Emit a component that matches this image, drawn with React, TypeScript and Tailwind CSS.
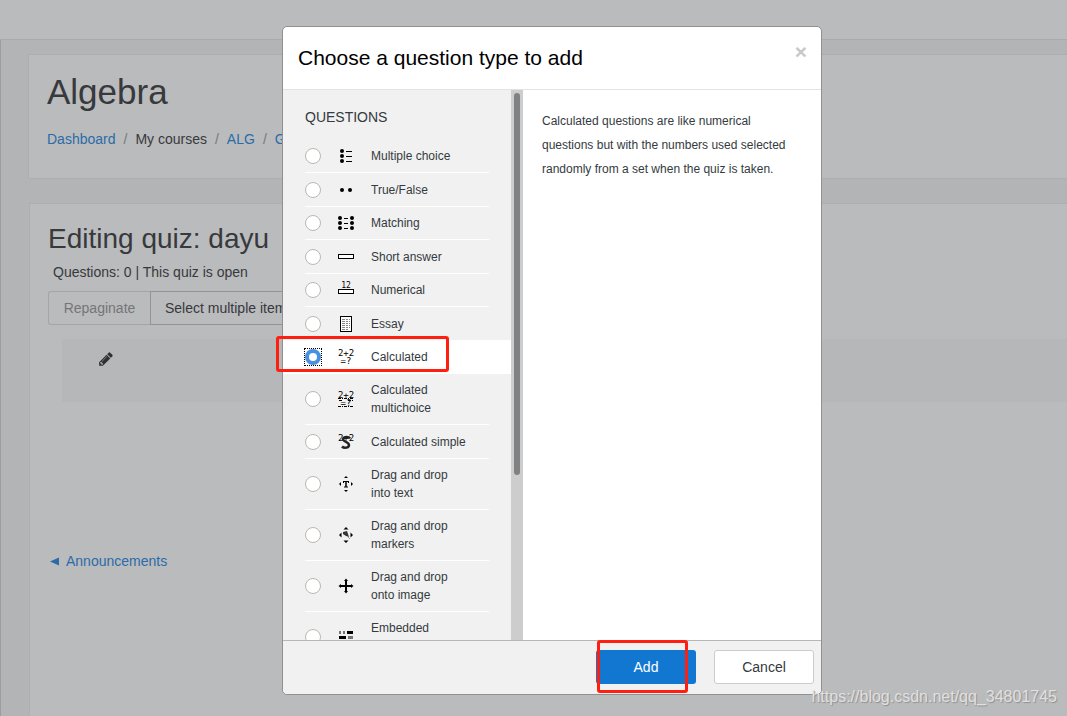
import React, { useState } from 'react'
import clsx from 'clsx'

const numerals = '[font-family:"DejaVu_Sans_Mono",monospace]'

const Dots = ({ cx }: { cx: number }) => (
   <>
      <circle cx={cx} cy="3" r="2" />
      <circle cx={cx} cy="8" r="2" />
      <circle cx={cx} cy="13" r="2" />
   </>
)

const DragArrows = () => <path d="M8 0l2.5 2.5h-5zM8 16l2.5-2.5h-5zM1 8l2.5-2.5v5zM15 8l-2.5-2.5v5z" />

const Sum = () => (
   <text x="8" y="7" fontSize="9" textAnchor="middle" className={numerals}>
      2+2
   </text>
)

const Unknown = () => (
   <text x="8" y="15" fontSize="9" textAnchor="middle" className={numerals}>
      =?
   </text>
)

const icons: Record<string, React.ReactNode> = {
   multichoice: (
      <>
         <Dots cx={4} />
         <path d="M8 3h6v1H8zM8 8h6v1H8zM8 13h6v1H8z" />
      </>
   ),
   truefalse: (
      <>
         <circle cx="4" cy="8" r="2" />
         <circle cx="12" cy="8" r="2" />
      </>
   ),
   match: (
      <>
         <Dots cx={2} />
         <Dots cx={14} />
         <path d="M6 3h4v1H6zM6 8h4v1H6zM6 13h4v1H6z" />
      </>
   ),
   shortanswer: <rect x="0.5" y="5.5" width="15" height="4" fill="#fff" stroke="#000" />,
   numerical: (
      <>
         <text x="8" y="6" fontSize="8" textAnchor="middle" className={numerals}>
            12
         </text>
         <rect x="0.5" y="7.5" width="15" height="4" fill="#fff" stroke="#000" />
      </>
   ),
   essay: (
      <>
         <rect x="2.5" y="0.5" width="11" height="15" fill="#fff" stroke="#000" />
         <path
            d="M4 3.5h8M4 5.5h8M4 7.5h8M4 9.5h8M4 11.5h8M4 13.5h6"
            stroke="#888"
            strokeWidth="1"
            strokeDasharray="3 1 2 1"
         />
      </>
   ),
   calculated: (
      <>
         <Sum />
         <Unknown />
      </>
   ),
   calculatedmulti: (
      <>
         <Sum />
         <Unknown />
         <path d="M0 7.5h16M1 9.5h4M10 9.5h5M0 15.5h16" stroke="#000" strokeDasharray="3 1 1 1" />
      </>
   ),
   calculatedsimple: (
      <>
         <Sum />
         <path
            d="M12 4.5C11 2.5 6 2 5 5c-.5 2.5 6 3 6 6 0 3-5 3.5-7 1.5"
            fill="none"
            stroke="#222"
            strokeWidth="2.5"
         />
      </>
   ),
   ddwtos: (
      <>
         <path d="M8 0l2 2H6zM8 16l2-2H6zM1 8l2-2v4zM15 8l-2-2v4z" />
         <path d="M5 5h6v2h-1V6H8.75v4.5H10v1H6v-1h1.25V6H6v1H5z" />
      </>
   ),
   ddmarker: (
      <>
         <DragArrows />
         <path d="M5 5l4-1 1 3 1 3-3-1-3-2z" fill="#333" />
         <path d="M9 9l3 3" stroke="#999" />
      </>
   ),
   ddimageortext: (
      <path d="M7 3H6l2-2.500L10 3H9v4h4V6l2.500 2L13 10V9H9v4h1l-2 2.500L6 13h1V9H3v1L.5 8 3 6v1h4z" />
   ),
   multianswer: (
      <>
         <path d="M1 2h2v3H1zM5 2h2v3H5zM10 7h5v3h-5z" fill="#777" />
         <path d="M9 2h6v3H9zM1 7h7v3H1z" />
      </>
   ),
}

const questionTypes = [
   { id: 'multichoice', label: 'Multiple choice' },
   { id: 'truefalse', label: 'True/False' },
   { id: 'match', label: 'Matching' },
   { id: 'shortanswer', label: 'Short answer' },
   { id: 'numerical', label: 'Numerical' },
   { id: 'essay', label: 'Essay' },
   { id: 'calculated', label: 'Calculated' },
   { id: 'calculatedmulti', label: 'Calculated multichoice' },
   { id: 'calculatedsimple', label: 'Calculated simple' },
   { id: 'ddwtos', label: 'Drag and drop into text' },
   { id: 'ddmarker', label: 'Drag and drop markers' },
   { id: 'ddimageortext', label: 'Drag and drop onto image' },
   { id: 'multianswer', label: 'Embedded answers (Cloze)' },
]

const PencilIcon = ({ className }: { className?: string }) => (
   <svg viewBox="0 0 1792 1792" className={clsx('size-4 fill-current', className)} aria-hidden="true">
      <path d="M491 1536l91-91-235-235-91 91v107h128v128h107zm523-928q0-22-22-22-10 0-17 7l-542 542q-7 7-7 17 0 22 22 22 10 0 17-7l542-542q7-7 7-17zm-54-192l416 416-832 832h-416v-416zm683 96q0 53-37 90l-166 166-416-416 166-165q36-38 90-38 53 0 91 38l235 234q37 39 37 91z" />
   </svg>
)

type OptionProps = {
   id: string
   label: string
   checked: boolean
   onSelect: (id: string) => void
}

const QuestionOption = ({ id, label, checked, onSelect }: OptionProps) => (
   <li className={clsx('group px-[22px]', checked && '-mt-px bg-white pt-px')}>
      <label
         htmlFor={`qtype_${id}`}
         className="flex min-h-[34px] items-center gap-[17px] border-b border-white py-[7px] group-[:nth-child(odd):nth-child(-n+7)]:min-h-[33px]"
      >
         <span className={clsx('flex shrink-0', checked && 'outline-1 outline-black outline-dotted')}>
            <input
               type="radio"
               name="qtype"
               id={`qtype_${id}`}
               checked={checked}
               onChange={() => onSelect(id)}
               className="size-4 appearance-none rounded-full border border-[#bdb7b2] bg-white outline-none checked:border-4 checked:border-[#4a90e2]"
            />
         </span>
         <svg viewBox="0 0 16 16" className="size-4 shrink-0 overflow-visible" aria-hidden="true">
            {icons[id]}
         </svg>
         <span className="w-[98px] text-xs leading-[18px]">{label}</span>
      </label>
   </li>
)

const QuestionDialog = () => {
   const [selected, setSelected] = useState('calculated')

   return (
      <div
         role="dialog"
         aria-labelledby="chooser-title"
         className="w-[540px] rounded-[5px] border border-[#8f9092] bg-white text-[#343a40]"
      >
         <div className="flex h-[63px] justify-between border-b border-[#e3e3e3] pr-[14px] pl-[15px] text-black">
            <h3 id="chooser-title" className="self-center text-[21px] leading-8">
               Choose a question type to add
            </h3>
            <button type="button" aria-label="Close" className="h-[50px] text-[21px] font-bold text-[#c8c8c8]">
               ×
            </button>
         </div>

         <div className="relative flex h-[550px]">
            <div className="w-[228px] overflow-hidden bg-[#f1f1f1]">
               <h4 className="px-[22px] pt-[17px] pb-[13px] text-sm leading-5">QUESTIONS</h4>
               <ul>
                  {questionTypes.map((type) => (
                     <QuestionOption
                        key={type.id}
                        id={type.id}
                        label={type.label}
                        checked={selected === type.id}
                        onSelect={setSelected}
                     />
                  ))}
               </ul>
            </div>
            <div className="w-3 bg-[#cdcdcd] px-[3px] pt-[3px]">
               <div className="h-[382px] rounded-full bg-[#7f8182]" />
            </div>
            <p className="flex-1 py-[19px] pr-[26px] pl-[19px] text-xs leading-6">
               Calculated questions are like numerical questions but with the numbers used selected randomly from a set
               when the quiz is taken.
            </p>
            <div className="pointer-events-none absolute top-[246px] -left-[7px] h-9 w-[173px] rounded-[3px] border-3 border-[#ff1f10]" />
         </div>

         <div className="flex justify-end gap-[18px] rounded-b-[5px] border-t border-[#b7b7b7] bg-[#f1f1f1] pt-[9px] pr-[7px] pb-[10px] text-sm">
            <div className="relative">
               <button type="button" className="h-[34px] w-[100px] rounded-[3px] bg-[#1177d1] text-white">
                  Add
               </button>
               <div className="pointer-events-none absolute -top-[10px] left-px h-[53px] w-[91px] rounded-[3px] border-3 border-[#ff1f10]" />
            </div>
            <button type="button" className="h-[34px] w-[100px] rounded-[3px] border border-[#cccccc] bg-white">
               Cancel
            </button>
         </div>
      </div>
   )
}

const Separator = () => <span className="px-2 text-[#77797c]">/</span>

const App = () => {
   return (
      <div className='relative flex min-h-screen flex-col overflow-hidden bg-[#b3b4b6] text-sm text-[#37393c] [font-family:"Liberation_Sans",Arial,sans-serif]'>
         <header className="h-10 border-b border-[#a9aaac] bg-[#babbbd]" />

         <main className="flex flex-1 flex-col gap-6 border-l border-[#9c9d9f] pt-[14px] pl-[27px]">
            <section className="h-[125px] border border-r-0 border-[#adaeb0] bg-[#babbbd] px-[18px] pt-[15px]">
               <h1 className="text-[35px] leading-[44px]">Algebra</h1>
               <nav aria-label="Breadcrumb" className="flex pt-[15px] leading-5">
                  <a href="#" className="text-[#2b6ba8]">
                     Dashboard
                  </a>
                  <Separator />
                  <span>My courses</span>
                  <Separator />
                  <a href="#" className="text-[#2b6ba8]">
                     ALG
                  </a>
                  <Separator />
                  <a href="#" className="text-[#2b6ba8]">
                     General
                  </a>
               </nav>
            </section>

            <section className="ml-px flex-1 border border-r-0 border-b-0 border-[#adaeb0] bg-[#babbbd] pt-4 pl-[18px]">
               <h2 className="flex items-center gap-3 text-[28px] leading-[38px]">
                  Editing quiz: dayu
                  <PencilIcon className="text-[#a8447e]" />
               </h2>
               <p className="pt-1 pl-[5px] leading-5">Questions: 0 | This quiz is open</p>
               <div className="flex pt-[9px]">
                  <button
                     type="button"
                     disabled
                     className="h-[34px] w-[102px] rounded-l-[3px] border border-r-0 border-[#a4a5a7] text-[#747578]"
                  >
                     Repaginate
                  </button>
                  <button type="button" className="h-[34px] border border-[#939496] px-[14px]">
                     Select multiple items
                  </button>
               </div>
               <div className="mt-[14px] ml-[14px] h-[63px] bg-[#b6b7b9] pt-3 pl-9">
                  <button type="button" aria-label="Edit heading">
                     <PencilIcon className="text-[#303134]" />
                  </button>
               </div>
               <a href="#" className="mt-[149px] inline-flex items-center gap-[6px] pl-[2px] leading-5 text-[#2b6ba8]">
                  <svg viewBox="0 0 10 10" className="size-[10px] fill-current" aria-hidden="true">
                     <path d="M0 5.500L9 1.500v8z" />
                  </svg>
                  Announcements
               </a>
            </section>
         </main>

         <div className="absolute inset-0 flex items-start justify-center pt-[26px] pl-[37px]">
            <QuestionDialog />
         </div>

         <span className="absolute right-[10px] bottom-[7px] text-base leading-6 text-[#e0e0e0] [text-shadow:1px_1px_1px_#8f8f8f]">
            https://blog.csdn.net/qq_34801745
         </span>
      </div>
   )
}

export default App
